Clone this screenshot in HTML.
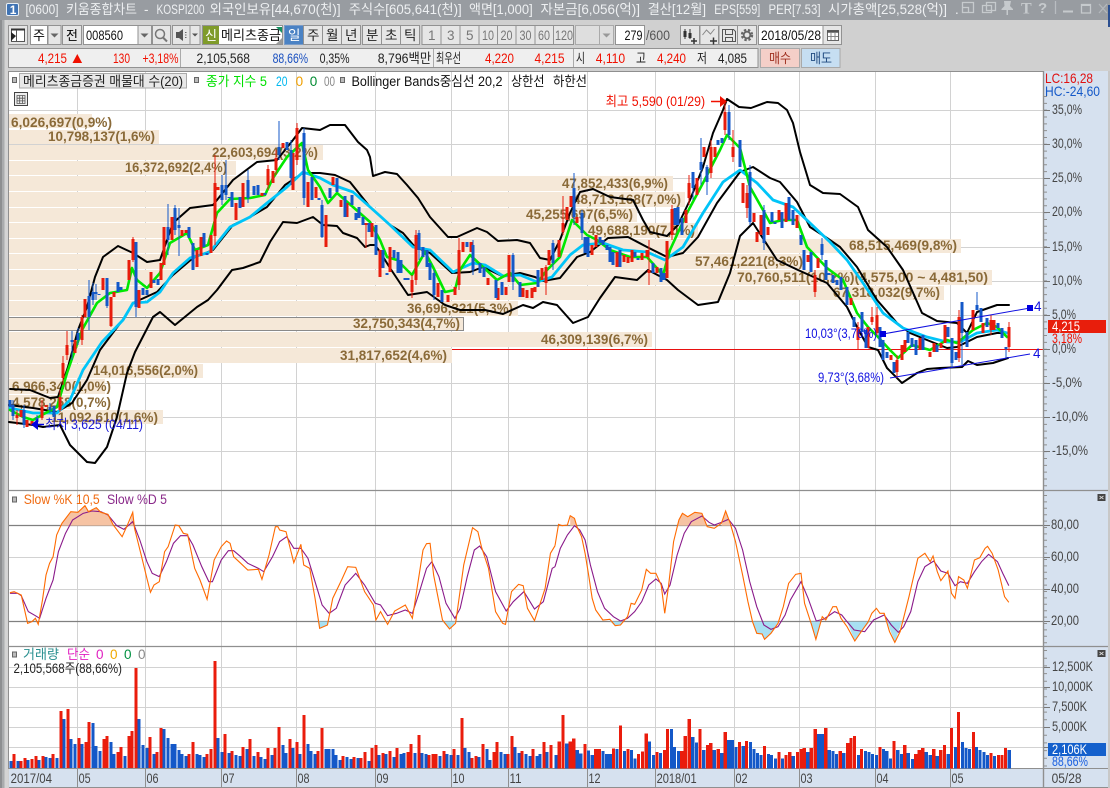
<!DOCTYPE html>
<html><head><meta charset="utf-8"><title>키움종합차트</title>
<style>
html,body{margin:0;padding:0;background:#d0d0d0;overflow:hidden;width:1110px;height:788px}
svg{display:block}
text{font-family:"Liberation Sans","Noto Sans CJK KR",sans-serif;font-size:13.5px;white-space:pre}
.t text{fill:#eef0f2;font-size:13.5px}
.b{fill:#e6e6e6;stroke:#929292}
.w{fill:#fff;stroke:#929292}
.l text{fill:#8a6a38;font-weight:bold;font-size:14px}
.g line{stroke:#d2d2d2;stroke-width:1}
.a text{fill:#444;font-size:14px}
.k text{font-size:13.5px;fill:#222}
.ne{vector-effect:non-scaling-stroke;fill:none}
</style></head><body>
<svg width="1110" height="788" viewBox="0 0 1110 788" xmlns="http://www.w3.org/2000/svg">
<rect width="1110" height="788" fill="#d0d0d0"/>
<!-- title bar -->
<rect width="1110" height="20" fill="#989ca1"/>
<rect x="1108" y="5" width="2" height="22" fill="#2b4f90"/>
<rect x="6.5" y="3.5" width="12" height="12" rx="1.5" fill="#3f73b4" stroke="#e8eef5"/>
<text x="9.8" y="14" style="font-size:12px;font-weight:bold" fill="#fff">1</text>
<g class="t">
<text x="25.5" y="14" lengthAdjust="spacingAndGlyphs" textLength="33">[0600]</text>
<text x="66" y="14" lengthAdjust="spacingAndGlyphs" textLength="71">키움종합차트</text>
<text x="144" y="14">-</text>
<text x="156.5" y="14" lengthAdjust="spacingAndGlyphs" textLength="48">KOSPI200</text>
<text x="209.6" y="14" lengthAdjust="spacingAndGlyphs" textLength="131">외국인보유[44,670(천)]</text>
<text x="348.7" y="14" lengthAdjust="spacingAndGlyphs" textLength="113">주식수[605,641(천)]</text>
<text x="469" y="14" lengthAdjust="spacingAndGlyphs" textLength="63.7">액면[1,000]</text>
<text x="540.5" y="14" lengthAdjust="spacingAndGlyphs" textLength="99.5">자본금[6,056(억)]</text>
<text x="647.7" y="14" lengthAdjust="spacingAndGlyphs" textLength="58.3">결산[12월]</text>
<text x="714.3" y="14" lengthAdjust="spacingAndGlyphs" textLength="46">EPS[559]</text>
<text x="768.5" y="14" lengthAdjust="spacingAndGlyphs" textLength="52">PER[7.53]</text>
<text x="828" y="14" lengthAdjust="spacingAndGlyphs" textLength="119">시가총액[25,528(억)]</text>
<text x="955" y="14">.</text>
</g>
<g fill="none" stroke="#c6cacd" stroke-width="1.3">
<path d="M962.5 2.5h11v10h-11zM962.5 7.5h6v5"/>
<path d="M986.5 2.5h9v8h-9zM982.5 5.5h9v7h-9z"/>
<path d="M1055.5 1v13" stroke="#b9bdc1"/>
<path d="M1063 11.5h10" stroke-width="2"/>
<path d="M1081.5 4.5h9v8.5h-9z"/><path d="M1081 5h10" stroke-width="2"/>
<path d="M1099 4l8 9M1107 4l-8 9" stroke="#b4b8bc"/>
</g>
<path d="M1004 1h7l-1 5 3 3v1h-5v5h-1.5v-5h-5v-1l3-3z" fill="#c6cacd"/>
<text x="1021" y="13.5" style="font-family:'Liberation Serif',serif;font-size:16px;font-weight:bold" fill="#c6cacd">T</text>
<text x="1038" y="13" style="font-size:15px;font-weight:bold" fill="#c6cacd">?</text>

<!-- toolbar row 1 -->
<rect class="b" x="8.5" y="25.5" width="19" height="19"/>
<path d="M11.5 29.5h13v12h-13z" fill="#fff" stroke="#555"/><path d="M11 29.5h14" stroke="#333" stroke-width="2"/><path d="M16.5 30v11" stroke="#555"/><path d="M11 32l5 4-5 5z" fill="#222"/>
<rect class="w" x="30.5" y="25.5" width="17" height="19"/>
<text x="33" y="40" style="font-size:13px">주</text>
<rect class="b" x="48" y="25.5" width="13" height="19"/><path d="M50.5 33.5h8l-4 4z" fill="#666"/>
<rect class="b" x="62.5" y="25.5" width="19" height="19"/><text x="66" y="40" style="font-size:13px">전</text>
<rect class="w" x="83.5" y="25.5" width="54.5" height="19"/>
<text x="86" y="40" lengthAdjust="spacingAndGlyphs" textLength="37" fill="#111">008560</text>
<rect class="b" x="138" y="25.5" width="13.5" height="19"/><path d="M140.5 33.5h8l-4 4z" fill="#666"/>
<rect class="b" x="152.5" y="25.5" width="18" height="19"/>
<circle cx="160" cy="34" r="4.5" fill="none" stroke="#777" stroke-width="1.5"/><path d="M163 37.5l4 4" stroke="#777" stroke-width="2"/>
<rect class="b" x="172.5" y="25.5" width="17.5" height="19"/>
<path d="M176 32h3l4-3v12l-4-3h-3z" fill="#555"/><path d="M185 32.5h1.5M185 35h1.5M185 37.5h1.5" stroke="#666"/>
<rect class="b" x="190" y="25.5" width="10" height="19"/><path d="M192 33.5h6l-3 3z" fill="#555"/>
<rect x="202.5" y="25.5" width="80" height="19" fill="#fff" stroke="#929292"/>
<rect x="203" y="26" width="16" height="18" fill="#7f9b2a"/>
<text x="205" y="40" style="font-size:13px" fill="#fff">신</text>
<text x="221" y="40" lengthAdjust="spacingAndGlyphs" textLength="60" fill="#111">메리츠종금</text>
<path d="M276 27h6v6z" fill="#159060"/><path d="M282 38v6h-6z" fill="#999"/>
<rect x="284.5" y="25.5" width="19" height="19" fill="#4a82c4" stroke="#7a9cc8"/><text x="288" y="40" fill="#fff">일</text>
<g class="k">
<rect class="b" x="303.5" y="25.5" width="19" height="19"/><text x="307" y="40">주</text>
<rect class="b" x="322.5" y="25.5" width="19" height="19"/><text x="326" y="40">월</text>
<rect class="b" x="341.5" y="25.5" width="19" height="19"/><text x="345" y="40">년</text>
<rect class="b" x="362.5" y="25.5" width="19" height="19"/><text x="366" y="40">분</text>
<rect class="b" x="381.5" y="25.5" width="19" height="19"/><text x="385" y="40">초</text>
<rect class="b" x="400.5" y="25.5" width="19" height="19"/><text x="404" y="40">틱</text>
</g>
<g>
<rect class="b" x="422" y="25.5" width="19" height="19"/><text x="428" y="40" fill="#777">1</text>
<rect class="b" x="441" y="25.5" width="19" height="19"/><text x="447" y="40" fill="#777">3</text>
<rect class="b" x="460" y="25.5" width="19" height="19"/><text x="466" y="40" fill="#777">5</text>
<rect class="b" x="479" y="25.5" width="18.5" height="19"/><text x="482" y="40" lengthAdjust="spacingAndGlyphs" textLength="12" fill="#777">10</text>
<rect class="b" x="497.5" y="25.5" width="18.5" height="19"/><text x="500.5" y="40" lengthAdjust="spacingAndGlyphs" textLength="12" fill="#777">20</text>
<rect class="b" x="516" y="25.5" width="19" height="19"/><text x="519.5" y="40" lengthAdjust="spacingAndGlyphs" textLength="12" fill="#777">30</text>
<rect class="b" x="535" y="25.5" width="18.5" height="19"/><text x="538" y="40" lengthAdjust="spacingAndGlyphs" textLength="12" fill="#777">60</text>
<rect class="b" x="553.5" y="25.5" width="20" height="19"/><text x="555" y="40" lengthAdjust="spacingAndGlyphs" textLength="18" fill="#777">120</text>
</g>
<rect x="575.5" y="25.5" width="38" height="19" fill="#dedede" stroke="#aaa"/><path d="M599.5 26v18" stroke="#aaa"/><path d="M602.5 33.5h8l-4 4z" fill="#999"/>
<rect class="w" x="615.5" y="25.5" width="29" height="19"/><text x="624.5" y="40" lengthAdjust="spacingAndGlyphs" textLength="18" fill="#111">279</text>
<text x="646" y="40" lengthAdjust="spacingAndGlyphs" textLength="24" fill="#555">/600</text>
<rect class="b" x="680.5" y="25.5" width="19" height="19"/>
<path d="M685 29v10M690 29v10" stroke="#333"/><path d="M683.5 31h3v6h-3zM688.5 33h3v5h-3z" fill="#333"/><path d="M691 41h6M694 38v6" stroke="#333" stroke-width="1.5"/>
<rect class="b" x="700" y="25.5" width="18.5" height="19"/>
<path d="M702.5 35l4-5 4 4 4-5" fill="none" stroke="#888"/><path d="M710 41h7M713.5 37.5v7" stroke="#333" stroke-width="1.5"/>
<rect class="b" x="719" y="25.5" width="18.5" height="19"/>
<path d="M722.5 29.5h11l2 2v10h-13zM725.5 29.5v5h7v-5M725.5 41.5v-4h7v4" fill="none" stroke="#555"/>
<rect class="b" x="737.5" y="25.5" width="19" height="19"/>
<circle cx="747" cy="35" r="4.8" fill="none" stroke="#666" stroke-width="2.8" stroke-dasharray="2.2 1.7"/><circle cx="747" cy="35" r="3.3" fill="none" stroke="#666" stroke-width="1.8"/>
<rect class="w" x="758.5" y="25.5" width="64.5" height="19"/><text x="761" y="40" lengthAdjust="spacingAndGlyphs" textLength="60" fill="#111">2018/05/28</text>
<rect class="b" x="823" y="25.5" width="18.5" height="19"/>
<path d="M827.5 30.5h11v10h-11z" fill="#fff" stroke="#666"/><path d="M827 31.5h12" stroke="#555" stroke-width="2.5"/><path d="M831 33v7M835 33v7M828 36.5h10" stroke="#888"/>

<!-- toolbar row 2 -->
<rect x="8.5" y="48.5" width="749.5" height="19" fill="#efefef" stroke="#929292"/>
<path d="M180.5 49v18M433.5 49v18M573.5 49v18" stroke="#aaa"/>
<g fill="#f01000">
<text x="38" y="63" lengthAdjust="spacingAndGlyphs" textLength="29">4,215</text>
<path d="M72.5 63l4.8-9 4.8 9z"/>
<text x="113" y="63" lengthAdjust="spacingAndGlyphs" textLength="17">130</text>
<text x="142.5" y="63" lengthAdjust="spacingAndGlyphs" textLength="36">+3,18%</text>
<text x="485" y="63" lengthAdjust="spacingAndGlyphs" textLength="29">4,220</text>
<text x="534.5" y="63" lengthAdjust="spacingAndGlyphs" textLength="30">4,215</text>
<text x="595.7" y="63" lengthAdjust="spacingAndGlyphs" textLength="29.5">4,110</text>
<text x="657" y="63" lengthAdjust="spacingAndGlyphs" textLength="29">4,240</text>
</g>
<g class="k">
<text x="196.5" y="63" lengthAdjust="spacingAndGlyphs" textLength="53.5">2,105,568</text>
<text x="319.6" y="63" lengthAdjust="spacingAndGlyphs" textLength="30">0,35%</text>
<text x="377.7" y="63" lengthAdjust="spacingAndGlyphs" textLength="53.5">8,796백만</text>
<text x="436" y="63" lengthAdjust="spacingAndGlyphs" textLength="25">최우선</text>
<text x="576" y="63" lengthAdjust="spacingAndGlyphs" textLength="9">시</text>
<text x="636" y="63" lengthAdjust="spacingAndGlyphs" textLength="10">고</text>
<text x="697" y="63" lengthAdjust="spacingAndGlyphs" textLength="10">저</text>
<text x="718" y="63" lengthAdjust="spacingAndGlyphs" textLength="29">4,085</text>
</g>
<text x="272.6" y="63" lengthAdjust="spacingAndGlyphs" textLength="35.5" fill="#1a50c0">88,66%</text>
<rect x="760.5" y="48.5" width="39" height="19" fill="#f4cfc8" stroke="#a9a9a9"/><text x="769" y="63" lengthAdjust="spacingAndGlyphs" textLength="22" fill="#a03020">매수</text>
<rect x="801.5" y="48.5" width="38.5" height="19" fill="#c6def2" stroke="#a9a9a9"/><text x="810" y="63" lengthAdjust="spacingAndGlyphs" textLength="22" fill="#204a80">매도</text>

<!-- frame & chart bg -->
<rect x="0" y="20" width="2" height="768" fill="#8d8f91"/><rect x="2" y="20" width="2.5" height="768" fill="#a9abad"/><rect x="4.5" y="20" width="3.5" height="768" fill="#d4d4d4"/>
<rect x="8.5" y="71.5" width="1035" height="697" fill="#fff" stroke="#8f8f8f"/>
<rect x="1044" y="71" width="64" height="717" fill="#d6e1ef"/>
<rect x="9" y="769" width="1035" height="18" fill="#d6e1ef"/>
<rect x="1108" y="71" width="2" height="717" fill="#c8c8c8"/>

<!-- vertical grid -->
<g class="g"><line x1="77.5" y1="72" x2="77.5" y2="787"/><line x1="145.5" y1="72" x2="145.5" y2="787"/><line x1="221.5" y1="72" x2="221.5" y2="787"/><line x1="296.5" y1="72" x2="296.5" y2="787"/><line x1="375.5" y1="72" x2="375.5" y2="787"/><line x1="451.5" y1="72" x2="451.5" y2="787"/><line x1="508.5" y1="72" x2="508.5" y2="787"/><line x1="587.5" y1="72" x2="587.5" y2="787"/><line x1="655.5" y1="72" x2="655.5" y2="787"/><line x1="734.5" y1="72" x2="734.5" y2="787"/><line x1="799.5" y1="72" x2="799.5" y2="787"/><line x1="875.5" y1="72" x2="875.5" y2="787"/><line x1="950.5" y1="72" x2="950.5" y2="787"/>
<!-- horizontal grid main -->
<line x1="9" y1="110.5" x2="1044" y2="110.5"/><line x1="9" y1="144.5" x2="1044" y2="144.5"/><line x1="9" y1="178.5" x2="1044" y2="178.5"/><line x1="9" y1="212.5" x2="1044" y2="212.5"/><line x1="9" y1="247.5" x2="1044" y2="247.5"/><line x1="9" y1="281.5" x2="1044" y2="281.5"/><line x1="9" y1="315.5" x2="1044" y2="315.5"/><line x1="9" y1="383.5" x2="1044" y2="383.5"/><line x1="9" y1="417.5" x2="1044" y2="417.5"/><line x1="9" y1="451.5" x2="1044" y2="451.5"/>
<!-- stoch + vol grid -->
<line x1="9" y1="557.5" x2="1044" y2="557.5"/><line x1="9" y1="589.5" x2="1044" y2="589.5"/>
<line x1="9" y1="667.5" x2="1044" y2="667.5"/><line x1="9" y1="687.5" x2="1044" y2="687.5"/><line x1="9" y1="707.5" x2="1044" y2="707.5"/><line x1="9" y1="727.5" x2="1044" y2="727.5"/><line x1="9" y1="747.5" x2="1044" y2="747.5"/>
</g>
<path d="M452 349.5H1044" stroke="#e81010" stroke-width="1"/>

<!-- volume profile bands -->
<g fill="#f5e8d8">
<rect x="9" y="114" width="83" height="14"/><rect x="9" y="130" width="150" height="14"/><rect x="9" y="145" width="314" height="15"/><rect x="9" y="161" width="227" height="14"/>
<rect x="9" y="176" width="664" height="15"/><rect x="9" y="192" width="676" height="15"/><rect x="9" y="208" width="628" height="14"/><rect x="9" y="223" width="689" height="15"/>
<rect x="9" y="239" width="952" height="14"/><rect x="9" y="254" width="794" height="15"/><rect x="9" y="270" width="983" height="15"/><rect x="9" y="286" width="935" height="14"/>
<rect x="9" y="301" width="509" height="15"/><rect x="9" y="318" width="454" height="13"/><rect x="9" y="332" width="643" height="15"/><rect x="9" y="348" width="443" height="15"/>
<rect x="9" y="364" width="194" height="14"/><rect x="9" y="379" width="96" height="15"/><rect x="9" y="395" width="62" height="14"/><rect x="9" y="410" width="154" height="14"/>
</g>
<path d="M9 317.5H463.5V330.5H9" fill="none" stroke="#8a8a8a"/>
<g class="l">
<text x="11" y="127" lengthAdjust="spacingAndGlyphs" textLength="101">6,026,697(0,9%)</text>
<text x="48" y="141" lengthAdjust="spacingAndGlyphs" textLength="107">10,798,137(1,6%)</text>
<text x="212" y="157" lengthAdjust="spacingAndGlyphs" textLength="106">22,603,694(3,2%)</text>
<text x="125" y="172" lengthAdjust="spacingAndGlyphs" textLength="102">16,372,692(2,4%)</text>
<text x="562" y="188" lengthAdjust="spacingAndGlyphs" textLength="106">47,852,433(6,9%)</text>
<text x="573" y="204" lengthAdjust="spacingAndGlyphs" textLength="108">48,713,168(7,0%)</text>
<text x="526" y="219" lengthAdjust="spacingAndGlyphs" textLength="107">45,255,697(6,5%)</text>
<text x="588" y="235" lengthAdjust="spacingAndGlyphs" textLength="107">49,688,190(7,0%)</text>
<text x="849" y="250" lengthAdjust="spacingAndGlyphs" textLength="108">68,515,469(9,8%)</text>
<text x="695" y="266" lengthAdjust="spacingAndGlyphs" textLength="108">57,461,221(8,3%)</text>
<text x="737" y="282" lengthAdjust="spacingAndGlyphs" textLength="251">70,760,511(10,2%)(4,575,00 ~ 4,481,50)</text>
<text x="833" y="297" lengthAdjust="spacingAndGlyphs" textLength="107">67,318,032(9,7%)</text>
<text x="407" y="313" lengthAdjust="spacingAndGlyphs" textLength="106">36,696,321(5,3%)</text>
<text x="353" y="328" lengthAdjust="spacingAndGlyphs" textLength="107">32,750,343(4,7%)</text>
<text x="541" y="344" lengthAdjust="spacingAndGlyphs" textLength="107">46,309,139(6,7%)</text>
<text x="340" y="360" lengthAdjust="spacingAndGlyphs" textLength="107">31,817,652(4,6%)</text>
<text x="93" y="375" lengthAdjust="spacingAndGlyphs" textLength="105">14,016,556(2,0%)</text>
<text x="12" y="391" lengthAdjust="spacingAndGlyphs" textLength="99">6,966,340(1,0%)</text>
<text x="12" y="407" lengthAdjust="spacingAndGlyphs" textLength="99">4,578,258(0,7%)</text>
<text x="51" y="422" lengthAdjust="spacingAndGlyphs" textLength="107">11,092,610(1,6%)</text>
</g>

<!-- Bollinger + MA -->
<g fill="none" stroke-linejoin="round" stroke-linecap="round">
<polyline stroke="#000" stroke-width="2" points="10,389 30,390 50,398 58,397 68,367 78,330 87,307 95,277 103,257 118,246 133,253 147,262 160,260 173,223 190,208 213,205 233,180 257,162 277,160 293,140 302,128 320,130 330,125 345,125 358,142 367,150 370,157 373,176 385,172 397,174 407,185 418,198 430,217 448,237 457,237 477,228 487,232 498,241 517,240 530,243 540,258 550,260 560,240 570,213 580,192 593,189 610,197 633,200 643,220 650,232 667,236 678,225 690,200 703,167 713,133 723,110 727,99 739,107 751,108 767,102 778,103 787,110 793,123 800,152 810,185 823,193 840,194 858,207 868,230 887,247 903,270 922,313 937,321 957,323 967,333 977,312 997,305 1009,305"/>
<polyline stroke="#000" stroke-width="2" points="9,422 33,425 43,427 60,425 70,445 87,462 95,463 107,447 117,417 127,373 135,352 153,317 160,312 175,325 197,307 208,300 217,290 232,270 243,268 260,262 270,242 283,222 297,223 313,217 323,225 337,226 343,233 357,238 365,247 370,245 375,245 380,252 390,268 408,295 427,292 445,305 460,310 485,310 503,314 523,305 533,308 543,302 557,305 573,323 588,317 600,298 615,277 637,280 648,270 667,280 678,290 698,305 718,302 730,273 740,236 753,223 777,260 798,270 827,283 847,307 857,327 868,347 878,350 887,368 902,383 917,373 927,369 940,368 962,367 968,361 977,365 993,363 1008,358"/>
<polyline stroke="#000" stroke-width="2" points="9,405 33,408 57,412 72,403 87,380 100,350 115,330 125,317 133,303 157,292 173,275 193,258 213,250 233,225 250,217 267,207 285,185 303,173 320,173 335,175 350,182 370,207 390,225 403,233 415,247 430,253 452,273 470,272 483,267 502,276 520,273 535,277 543,281 560,278 577,257 590,252 608,238 628,237 647,247 667,257 683,253 698,237 717,203 740,172 753,167 770,178 780,182 797,202 810,227 827,238 840,247 857,267 877,300 897,323 910,333 927,340 947,348 957,347 977,337 997,333 1008,333"/>
<polyline stroke="#00c4f8" stroke-width="2.8" points="10,408 33,413 57,413 70,400 83,370 102,342 123,320 133,303 147,302 160,292 173,273 190,258 210,252 230,227 250,217 267,203 287,187 303,172 320,178 333,185 353,192 370,207 390,225 413,247 430,250 453,272 473,263 485,265 503,276 520,275 537,282 552,277 570,255 583,245 603,243 623,250 647,252 665,260 683,247 703,213 723,182 740,170 757,183 773,200 793,207 810,223 830,242 847,260 863,283 883,313 903,328 927,337 947,342 960,342 977,333 997,330 1007,333"/>
<polyline stroke="#00e800" stroke-width="2.6" points="10,410 23,417 33,420 42,415 57,407 67,373 82,330 97,303 110,293 127,290 132,268 137,280 147,288 160,273 170,243 187,233 195,250 208,245 217,213 230,199 250,198 265,195 273,178 287,157 302,143 308,170 320,187 328,203 337,193 353,207 370,222 380,240 387,257 397,260 412,275 425,252 433,267 445,292 455,290 460,270 470,255 483,267 497,280 510,273 520,285 537,283 547,270 560,257 572,220 587,235 597,240 610,250 630,257 647,257 663,275 670,250 687,213 703,183 720,150 727,135 740,148 750,187 763,210 770,223 783,220 797,220 807,247 827,268 843,280 857,313 868,327 878,337 890,350 898,358 912,345 930,350 947,340 957,343 973,330 987,323 997,327 1007,337"/>
</g>

<!-- candles -->
<g fill="none" shape-rendering="crispEdges">
<path stroke="#e81c0c" stroke-width="1" d="M67 331V360M63 356V385M297 123V165M215 155V245M366 223V248M133 237V262M276 150V175M268 165V190M111 297V327M82 315V345M459 238V290M563 196V235M649 240V285M546 265V295M725 100V135M733 130V162M416 230V285M412 275V298M672 205V240M689 175V205M711 140V178M858 322V350M872 307V325M877 307V335M959 310V362M897 355V378M1009 322V352M991 315V335M815 270V297M747 185V218M42 400V420M17 410V425M60 390V412"/>
<path stroke="#e81c0c" stroke-width="3" d="M17 415V418M21 410V417M27 420V427M32 421V425M42 407V418M46 405V407M60 397V410M63 363V378M67 345V355M75 340V353M82 317V340M85 299V317M103 278V290M111 297V326M114 292V297M129 260V280M133 239V260M139 290V308M151 272V288M161 263V280M164 227V265M172 217V240M182 230V236M186 230V233M197 250V267M201 237V256M211 235V253M215 183V236M218 187V190M236 203V220M243 183V207M262 193V196M268 169V185M273 171V183M276 158V170M283 143V148M293 153V190M297 128V160M308 182V207M316 187V198M326 215V247M333 177V185M341 200V207M347 203V217M366 223V225M372 223V237M380 250V277M390 247V272M412 280V292M416 235V280M438 283V297M448 295V302M455 287V295M459 250V285M463 242V252M471 242V252M488 278V285M498 288V300M506 287V295M509 255V282M523 288V297M527 290V298M532 288V298M535 287V292M542 268V280M546 267V283M549 250V265M559 240V257M563 223V232M567 207V220M571 196V207M577 217V223M592 245V255M596 235V247M617 252V267M624 255V262M628 257V263M632 250V262M642 253V260M647 250V257M649 270V273M657 267V273M667 241V278M672 209V235M686 210V223M689 183V198M697 178V195M704 147V157M711 147V173M715 147V157M725 112V130M733 147V157M743 183V203M747 193V208M754 213V222M757 232V242M761 215V235M768 227V235M779 210V220M786 203V222M797 215V228M808 255V262M815 275V292M818 258V268M851 298V305M858 327V340M868 327V348M872 317V322M877 315V333M891 355V360M897 360V372M902 345V360M905 340V352M920 338V350M930 352V357M934 343V352M941 343V348M945 325V343M959 317V358M973 310V330M983 323V333M991 320V330M994 320V330M1009 327V347"/>
<path stroke="#1458c8" stroke-width="1" d="M89 280V330M136 242V317M179 208V256M168 204V255M222 175V205M226 160V200M248 170V203M279 121V160M291 140V185M304 128V205M322 200V238M107 278V308M175 205V235M72 331V360M78 328V345M93 283V305M96 284V300M574 173V225M513 253V290M729 105V140M693 172V200M701 138V185M707 165V195M1006 347V358M977 292V310M962 302V365M952 338V368M822 238V260M750 165V225M764 205V250M419 230V260M434 270V300M473 240V275M553 240V270M582 210V240M13 400V420M24 405V428M37 415V425M50 403V413"/>
<path stroke="#1458c8" stroke-width="3" d="M10 400V407M13 405V416M24 410V425M37 418V422M50 407V410M54 406V417M72 340V342M78 333V340M89 296V317M93 292V300M96 292V294M99 294V295M107 278V306M118 282V292M121 287V290M136 242V307M143 288V295M147 290V295M154 280V283M158 279V285M168 227V240M175 208V230M179 225V228M189 227V238M193 243V270M204 233V247M207 253V255M222 185V200M226 185V195M229 197V198M232 192V207M240 197V208M248 180V198M254 186V195M258 185V195M265 193V195M279 147V155M287 142V150M291 150V178M304 133V198M312 177V200M319 198V200M322 205V237M330 188V198M337 178V192M345 196V217M352 195V205M356 213V220M359 207V218M363 217V225M369 223V232M376 225V255M383 250V268M387 273V275M394 250V258M398 252V273M401 260V273M405 278V280M408 278V280M419 233V250M423 247V257M427 250V267M430 263V280M434 273V295M442 290V302M467 242V247M473 245V270M480 263V273M484 267V277M496 280V298M502 282V295M513 255V282M520 282V297M538 270V287M553 243V263M574 188V217M582 213V233M585 237V253M588 237V257M600 237V243M603 240V245M607 245V250M610 247V262M613 252V265M620 250V267M635 252V257M638 258V260M653 263V273M661 268V282M664 273V280M675 208V225M678 207V225M682 218V235M693 172V188M701 162V170M707 167V182M718 140V145M722 138V143M729 112V135M740 140V167M750 172V222M764 210V243M772 212V222M775 222V224M782 212V228M789 197V220M793 210V225M801 235V245M804 250V270M811 252V272M822 244V255M826 260V280M829 273V275M833 275V283M837 280V285M841 277V290M847 287V305M854 317V327M862 312V332M866 330V348M880 327V347M883 340V360M887 352V358M894 362V373M908 332V343M912 338V347M916 340V355M923 335V350M937 345V352M948 327V337M952 338V363M956 352V360M962 302V333M967 332V347M977 305V310M981 308V322M987 318V327M998 323V328M1002 328V338M1006 347V349"/>
</g>

<!-- annotations main -->
<text x="605.6" y="106" lengthAdjust="spacingAndGlyphs" textLength="99.5" fill="#f01000">최고 5,590 (01/29)</text>
<path d="M711 101.5h12" stroke="#f01000" stroke-width="1.5"/><path d="M720 96l7 5.5-7 5.5z" fill="#f01000"/>
<path d="M37 424.5h7" stroke="#0000e0" stroke-width="1.5"/><path d="M38 419l-7 5.5 7 5.5z" fill="#0000e0"/>
<text x="45" y="429" lengthAdjust="spacingAndGlyphs" textLength="98" fill="#1c1cd8">최저 3,625 (04/11)</text>
<path d="M883 334L1030 308M890 378L1030 354" stroke="#1010e0" stroke-width="1" fill="none"/>
<rect x="880" y="331" width="6" height="6" fill="#0000e0"/><rect x="1027" y="305" width="6" height="6" fill="#0000e0"/>
<text x="1034" y="311" fill="#1010e0">4</text><text x="1033" y="358" fill="#1010e0">4</text>
<text x="805" y="338" lengthAdjust="spacingAndGlyphs" textLength="72" fill="#1010e0">10,03°(3,76%)</text>
<text x="818" y="382" lengthAdjust="spacingAndGlyphs" textLength="66" fill="#1010e0">9,73°(3,68%)</text>

<!-- legends -->
<rect x="12.5" y="77.5" width="4" height="5" fill="#bbb" stroke="#666"/>
<rect x="19.5" y="73.5" width="167" height="14.5" fill="#e8e8e8" stroke="#aaa"/>
<text x="23" y="86" lengthAdjust="spacingAndGlyphs" textLength="160" fill="#222">메리츠종금증권 매물대 수(20)</text>
<rect x="194.5" y="77.5" width="4" height="5" fill="#bbb" stroke="#666"/>
<text x="206" y="86" lengthAdjust="spacingAndGlyphs" textLength="61" fill="#00e000">종가 지수 5</text>
<text x="276" y="86" lengthAdjust="spacingAndGlyphs" textLength="11.5" fill="#00b8f0">20</text>
<text x="295.6" y="86" fill="#f0a000">0</text>
<text x="309.7" y="86" fill="#008a30">0</text>
<text x="324" y="86" lengthAdjust="spacingAndGlyphs" textLength="11" fill="#888">00</text>
<rect x="340.5" y="77.5" width="4" height="5" fill="#bbb" stroke="#666"/>
<text x="351.5" y="86" lengthAdjust="spacingAndGlyphs" textLength="151" fill="#111">Bollinger Bands중심선 20,2</text>
<text x="511" y="86" lengthAdjust="spacingAndGlyphs" textLength="33.5" fill="#111">상한선</text>
<text x="553" y="86" lengthAdjust="spacingAndGlyphs" textLength="34" fill="#111">하한선</text>
<rect x="14.5" y="92.5" width="13" height="13" fill="#eee" stroke="#444"/>
<path d="M17 95.5h8v8h-8zM19.7 95.5v8M22.4 95.5v8M17 98.2h8M17 100.9h8" fill="none" stroke="#555" stroke-width=".8"/>

<!-- panel separators -->
<path d="M9 490.5H1108M9 646.5H1108" stroke="#8f8f8f" stroke-width="1.2"/>
<path d="M9 525.5H1044M9 621.5H1044" stroke="#808080" stroke-width="1.3"/>
<path d="M9 768.5H1108M9 787.5H1108" stroke="#8f8f8f"/>

<!-- stochastic -->
<rect x="12.5" y="497" width="4" height="5" fill="#bbb" stroke="#666"/>
<text x="23.7" y="504" lengthAdjust="spacingAndGlyphs" textLength="76" fill="#f06a10">Slow %K 10,5</text>
<text x="107" y="504" lengthAdjust="spacingAndGlyphs" textLength="60" fill="#8a2a8a">Slow %D 5</text>
<g transform="translate(0,485) scale(.35398,.33333)">
<path fill="#f6c3a3" d="M172 122L175 115 200 80 220 82 240 62 250 80 272 68 285 82 305 88 320 122ZM365 122L375 82 380 122Z"/>
<path fill="#a8e0f2" d="M898 410L903 430 925 420 930 410ZM1250 410L1270 432 1287 410Z"/>
<polyline class="ne" stroke="#8a1a8a" stroke-width="1.1" points="28,325 50,325 60,332 80,380 100,392 112,400 130,340 150,285 165,200 185,145 205,105 235,85 260,78 285,80 305,90 330,122 350,133 375,110 395,165 415,230 430,265 450,275 470,230 490,175 510,152 530,152 545,180 570,245 590,290 600,290 625,225 645,197 660,197 680,215 700,235 730,250 745,260 770,215 790,170 810,155 830,190 850,190 870,220 890,290 910,360 930,385 950,370 975,300 1005,265 1030,300 1060,355 1075,360 1095,392 1120,385 1145,375 1165,385 1185,320 1205,250 1220,230 1240,275 1260,355 1285,400 1300,370 1320,275 1340,195 1355,183 1375,215 1400,320 1430,378 1450,350 1480,320 1510,372 1535,350 1560,250 1568,245"/>
<polyline class="ne" stroke="#ff6a00" stroke-width="1.1" points="28,323 40,320 60,330 78,415 90,410 100,400 108,418 120,345 130,270 140,235 150,215 160,150 175,115 200,80 220,82 240,62 250,80 272,68 285,82 305,88 320,120 345,155 360,120 375,82 380,130 400,215 415,280 425,322 435,300 450,290 465,200 475,185 495,120 505,122 518,145 530,148 550,250 565,285 585,343 605,225 625,185 640,168 650,175 660,215 680,235 700,255 730,253 740,283 760,210 778,125 785,125 790,135 808,140 830,233 850,178 858,240 875,250 890,340 903,430 925,420 940,340 965,285 982,245 1005,247 1030,320 1055,360 1062,405 1075,380 1095,418 1115,378 1145,360 1165,400 1195,195 1205,176 1215,175 1225,270 1250,405 1270,432 1287,415 1310,240 1335,128 1350,140 1360,185 1380,250 1400,380 1420,415 1428,418 1445,320 1465,298 1478,302 1490,370 1510,407 1540,310 1555,205 1568,182"/>
</g>
<g transform="translate(555,485) scale(.35398,.33333)">
<path fill="#f6c3a3" d="M43 122L43 92 55 100 62 122ZM345 122L350 105 360 85 375 95 395 82 415 85 430 122ZM470 122L482 78 495 122Z"/>
<path fill="#a8e0f2" d="M155 410L170 422 185 420 195 410ZM558 410L570 445 585 447 592 463 610 445 630 410ZM720 410L737 463 752 410ZM825 410L847 468 865 440 890 410ZM938 410L960 472 980 410Z"/>
<polyline class="ne" stroke="#8a1a8a" stroke-width="1.1" points="0,245 15,190 35,150 55,122 70,135 85,165 100,240 120,320 140,370 165,395 185,408 205,400 225,380 245,350 265,300 285,282 300,295 310,327 325,300 345,210 365,145 385,110 415,93 435,112 450,120 470,112 490,103 510,130 530,195 550,290 570,365 590,420 610,433 630,425 650,390 665,345 695,290 715,340 738,408 760,402 790,380 810,390 825,410 845,435 875,440 900,405 930,390 950,420 970,442 985,425 1005,380 1025,290 1045,245 1070,228 1090,258 1110,265 1130,302 1145,290 1165,295 1185,260 1205,230 1225,208 1250,230 1265,265 1282,302"/>
<polyline class="ne" stroke="#ff6a00" stroke-width="1.1" points="0,182 10,118 20,122 35,120 43,92 55,100 62,125 75,155 85,205 95,270 105,340 115,375 135,405 155,403 170,422 185,420 205,395 215,355 225,358 245,315 258,253 270,265 285,265 300,300 310,385 320,310 335,170 350,105 360,85 375,95 395,82 415,85 430,125 450,130 470,115 482,78 495,115 510,170 530,270 545,350 558,410 570,445 585,447 592,463 610,445 630,415 645,365 660,295 680,268 695,265 705,355 725,420 737,463 755,395 765,405 785,365 795,365 808,400 825,425 847,468 865,440 885,410 895,385 908,370 918,385 930,385 945,440 960,472 975,440 1000,335 1025,220 1045,205 1060,230 1068,213 1080,260 1090,287 1110,258 1120,325 1130,340 1140,275 1155,285 1165,310 1185,225 1200,218 1215,190 1222,184 1235,205 1252,255 1270,335 1282,352"/>
</g>

<!-- volume legend -->
<rect x="12.5" y="652" width="4" height="5" fill="#bbb" stroke="#666"/>
<text x="23" y="659" lengthAdjust="spacingAndGlyphs" textLength="36" fill="#2a9090">거래량</text>
<text x="67" y="659" lengthAdjust="spacingAndGlyphs" textLength="23" fill="#e020c0">단순</text>
<text x="96" y="659" fill="#e020c0">0</text><text x="110" y="659" fill="#f0a800">0</text><text x="124" y="659" fill="#009040">0</text><text x="138" y="659" fill="#888">0</text>
<text x="13.5" y="673" lengthAdjust="spacingAndGlyphs" textLength="108.5" fill="#222">2,105,568주(88,66%)</text>

<!-- volume bars -->
<g fill="none" shape-rendering="crispEdges" stroke-width="3.2">
<path stroke="#ea1c0c" d="M14 768v-14M21 768v-7M25 768v-10M32 768v-9M36 768v-12M43 768v-12M53 768v-14M61 768v-57M68 768v-59M79 768v-30M86 768v-26M89 768v-46M104 768v-29M107 768v-32M118 768v-16M121 768v-21M129 768v-32M132 768v-37M136 768v-100M150 768v-31M157 768v-16M161 768v-40M189 768v-14M193 768v-26M207 768v-14M211 768v-19M215 768v-107M225 768v-34M232 768v-17M243 768v-21M250 768v-29M258 768v-16M268 768v-20M275 768v-20M279 768v-41M290 768v-29M297 768v-26M304 768v-53M318 768v-17M322 768v-40M343 768v-12M354 768v-11M361 768v-10M365 768v-16M372 768v-20M376 768v-23M383 768v-15M390 768v-17M397 768v-20M408 768v-16M411 768v-24M419 768v-33M429 768v-13M433 768v-14M436 768v-14M444 768v-17M454 768v-19M462 768v-50M472 768v-10M476 768v-12M483 768v-24M494 768v-16M497 768v-26M508 768v-14M512 768v-32M522 768v-17M533 768v-19M544 768v-26M551 768v-23"/>
<path stroke="#1458c8" d="M11 768v-7M18 768v-7M28 768v-8M39 768v-8M46 768v-11M50 768v-10M57 768v-10M64 768v-49M71 768v-29M75 768v-24M82 768v-24M93 768v-45M96 768v-22M100 768v-17M111 768v-26M114 768v-14M125 768v-12M139 768v-49M143 768v-23M147 768v-20M154 768v-14M164 768v-39M168 768v-30M172 768v-24M175 768v-24M179 768v-18M182 768v-14M186 768v-12M197 768v-14M200 768v-13M204 768v-11M218 768v-30M222 768v-16M229 768v-15M236 768v-13M240 768v-12M247 768v-19M254 768v-12M261 768v-11M265 768v-9M272 768v-13M283 768v-23M286 768v-15M293 768v-20M300 768v-14M308 768v-24M311 768v-17M315 768v-14M326 768v-19M329 768v-19M333 768v-19M336 768v-13M340 768v-8M347 768v-11M351 768v-9M358 768v-10M369 768v-7M379 768v-13M386 768v-14M394 768v-11M401 768v-14M404 768v-15M415 768v-15M422 768v-15M426 768v-14M440 768v-12M447 768v-14M451 768v-13M458 768v-13M465 768v-20M469 768v-16M479 768v-11M487 768v-19M490 768v-8M501 768v-16M505 768v-14M515 768v-21M519 768v-15M526 768v-14M530 768v-12M537 768v-12M540 768v-14M547 768v-16"/>
</g>
<g transform="translate(555,485) scale(.35398,.33333)" shape-rendering="crispEdges">
<path class="ne" stroke="#ea1c0c" stroke-width="3.2" d="M12 850V770M23 850V690M43 850V770M53 850V760M85 850V777M115 850V792M125 850V792M165 850V790M185 850V722M206 850V792M236 850V807M247 850V800M258 850V745M288 850V801M309 850V795M318 850V732M358 850V798M368 850V753M379 850V702M410 850V732M431 850V780M440 850V774M461 850V792M481 850V741M521 850V771M541 850V768M592 850V783M633 850V801M653 850V810M663 850V801M685 850V801M695 850V792M704 850V789M724 850V789M735 850V732M765 850V729M806 850V798M827 850V774M836 850V759M846 850V753M866 850V792M918 850V786M958 850V768M988 850V780M1019 850V807M1029 850V795M1039 850V789M1070 850V792M1090 850V795M1100 850V780M1120 850V729M1140 850V681M1182 850V741M1232 850V804M1253 850V810M1263 850V810M1273 850V789"/>
<path class="ne" stroke="#1458c8" stroke-width="3.2" d="M3 850V810M33 850V775M63 850V795M73 850V805M95 850V797M105 850V810M136 850V798M146 850V807M156 850V807M175 850V792M196 850V798M216 850V795M226 850V820M267 850V770M278 850V810M298 850V804M329 850V732M338 850V786M349 850V798M389 850V756M400 850V773M420 850V795M450 850V795M471 850V804M491 850V765M501 850V765M511 850V786M532 850V783M552 850V771M562 850V792M572 850V804M582 850V810M603 850V807M612 850V810M623 850V820M643 850V820M673 850V813M714 850V801M745 850V747M755 850V747M775 850V795M785 850V798M795 850V807M816 850V804M857 850V810M877 850V798M887 850V801M897 850V807M908 850V810M928 850V792M937 850V798M948 850V820M968 850V795M979 850V807M998 850V804M1010 850V822M1049 850V801M1060 850V810M1080 850V813M1111 850V807M1131 850V786M1151 850V771M1161 850V789M1171 850V792M1191 850V786M1201 850V795M1212 850V801M1222 850V810M1242 850V813M1283 850V795"/>
</g>

<!-- date axis -->
<path d="M77.5 769v18M145.5 769v18M221.5 769v18M296.5 769v18M375.5 769v18M451.5 769v18M508.5 769v18M587.5 769v18M655.5 769v18M734.5 769v18M799.5 769v18M875.5 769v18M950.5 769v18M1043.5 769v18" stroke="#8f8f8f"/>
<g class="a">
<text x="10.6" y="783" lengthAdjust="spacingAndGlyphs" textLength="41.4">2017/04</text>
<text x="78.6" y="783" lengthAdjust="spacingAndGlyphs" textLength="12">05</text><text x="146.5" y="783" lengthAdjust="spacingAndGlyphs" textLength="12">06</text><text x="222.5" y="783" lengthAdjust="spacingAndGlyphs" textLength="12">07</text><text x="297.5" y="783" lengthAdjust="spacingAndGlyphs" textLength="12">08</text><text x="376.5" y="783" lengthAdjust="spacingAndGlyphs" textLength="12">09</text><text x="452.5" y="783" lengthAdjust="spacingAndGlyphs" textLength="12">10</text><text x="509.5" y="783" lengthAdjust="spacingAndGlyphs" textLength="12">11</text><text x="588.5" y="783" lengthAdjust="spacingAndGlyphs" textLength="12">12</text>
<text x="656.6" y="783" lengthAdjust="spacingAndGlyphs" textLength="40">2018/01</text>
<text x="735.5" y="783" lengthAdjust="spacingAndGlyphs" textLength="12">02</text><text x="800.5" y="783" lengthAdjust="spacingAndGlyphs" textLength="12">03</text><text x="876.5" y="783" lengthAdjust="spacingAndGlyphs" textLength="12">04</text><text x="951.5" y="783" lengthAdjust="spacingAndGlyphs" textLength="12">05</text>
<text x="1051.6" y="783" lengthAdjust="spacingAndGlyphs" textLength="30">05/28</text>
</g>

<!-- right axis -->
<path d="M1043.5 71V788" stroke="#8f8f8f" stroke-width="1.4"/>
<path d="M1045.5 96V488" stroke="#8f8f8f" stroke-width="3" stroke-dasharray="1 5.83"/>
<path d="M1045.5 495V645" stroke="#8f8f8f" stroke-width="3" stroke-dasharray="1 5.4"/>
<path d="M1045.5 650V768" stroke="#8f8f8f" stroke-width="3" stroke-dasharray="1 6.7"/>
<path d="M1044 110.5h6M1044 144.5h6M1044 178.5h6M1044 212.5h6M1044 247.5h6M1044 281.5h6M1044 315.5h6M1044 349.5h6M1044 383.5h6M1044 417.5h6M1044 451.5h6M1044 525.5h6M1044 557.5h6M1044 589.5h6M1044 621.5h6M1044 667.5h6M1044 687.5h6M1044 707.5h6M1044 727.5h6M1044 747.5h6" stroke="#777"/>
<text x="1045" y="83" lengthAdjust="spacingAndGlyphs" textLength="48" fill="#e01010" style="font-size:14px">LC:16,28</text>
<text x="1045" y="96" lengthAdjust="spacingAndGlyphs" textLength="55" fill="#1458c8" style="font-size:14px">HC:-24,60</text>
<g class="a">
<text x="1052" y="114" lengthAdjust="spacingAndGlyphs" textLength="30">35,0%</text><text x="1052" y="148" lengthAdjust="spacingAndGlyphs" textLength="30">30,0%</text><text x="1052" y="182" lengthAdjust="spacingAndGlyphs" textLength="30">25,0%</text><text x="1052" y="216" lengthAdjust="spacingAndGlyphs" textLength="30">20,0%</text><text x="1052" y="251" lengthAdjust="spacingAndGlyphs" textLength="30">15,0%</text><text x="1052" y="285" lengthAdjust="spacingAndGlyphs" textLength="30">10,0%</text><text x="1052" y="319" lengthAdjust="spacingAndGlyphs" textLength="24">5,0%</text><text x="1052" y="353" lengthAdjust="spacingAndGlyphs" textLength="24">0,0%</text><text x="1052" y="387" lengthAdjust="spacingAndGlyphs" textLength="30">-5,0%</text><text x="1052" y="421" lengthAdjust="spacingAndGlyphs" textLength="36">-10,0%</text><text x="1052" y="455" lengthAdjust="spacingAndGlyphs" textLength="36">-15,0%</text>
<text x="1051" y="529" lengthAdjust="spacingAndGlyphs" textLength="28">80,00</text><text x="1051" y="561" lengthAdjust="spacingAndGlyphs" textLength="28">60,00</text><text x="1051" y="593" lengthAdjust="spacingAndGlyphs" textLength="28">40,00</text><text x="1051" y="625" lengthAdjust="spacingAndGlyphs" textLength="28">20,00</text>
<text x="1052" y="671" lengthAdjust="spacingAndGlyphs" textLength="41">12,500K</text><text x="1052" y="691" lengthAdjust="spacingAndGlyphs" textLength="41">10,000K</text><text x="1052" y="711" lengthAdjust="spacingAndGlyphs" textLength="35">7,500K</text><text x="1052" y="731" lengthAdjust="spacingAndGlyphs" textLength="35">5,000K</text>
</g>
<rect x="1048" y="320" width="58" height="13" fill="#e81e0c"/>
<text x="1052" y="331" lengthAdjust="spacingAndGlyphs" textLength="28" fill="#fff">4,215</text>
<text x="1052" y="343" lengthAdjust="spacingAndGlyphs" textLength="30" fill="#f01000">3,18%</text>
<rect x="1048" y="743" width="58" height="13" fill="#1460cc"/>
<text x="1052" y="754" lengthAdjust="spacingAndGlyphs" textLength="35" fill="#fff">2,106K</text>
<text x="1052" y="766" lengthAdjust="spacingAndGlyphs" textLength="36" fill="#1a60e0">88,66%</text>
<rect x="1097.5" y="494" width="8" height="7" fill="#444"/><path d="M1099.5 496l4 3M1103.5 496l-4 3" stroke="#ddd" stroke-width=".8"/>
<rect x="1097.5" y="650" width="8" height="7" fill="#444"/><path d="M1099.5 652l4 3M1103.5 652l-4 3" stroke="#ddd" stroke-width=".8"/>
</svg>
</body></html>
